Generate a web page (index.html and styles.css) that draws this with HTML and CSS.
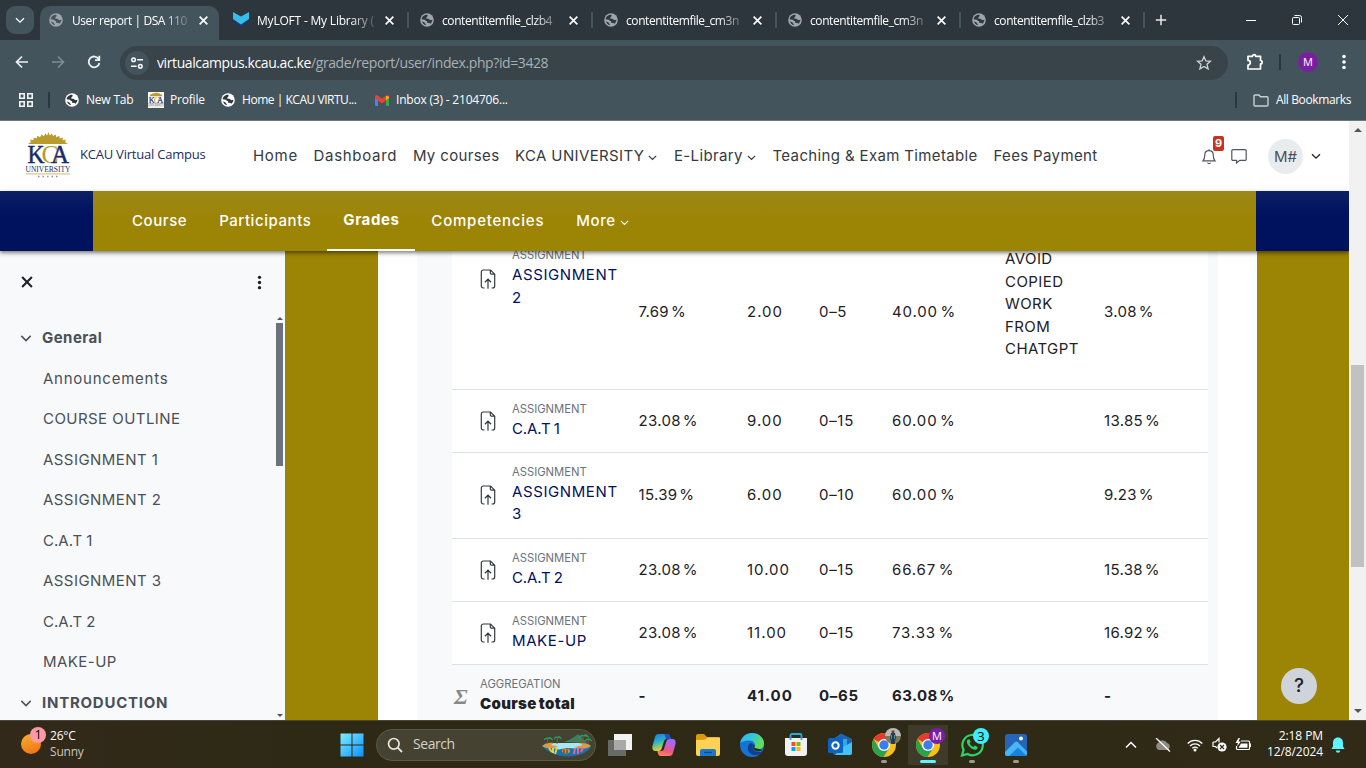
FILE: index.html
```html
<!DOCTYPE html>
<html lang="en">
<head>
<meta charset="utf-8">
<title>User report | DSA 110</title>
<link rel="stylesheet" href="styles.css">
</head>
<body>
<svg width="0" height="0" class="defs">
  <defs>
    <symbol id="globe" viewBox="0 0 16 16"><circle cx="8" cy="8" r="7.8" fill="currentColor"/><path d="M1.800 7.200C2 5 3.500 2.800 6 2.200c2-.4 3 .2 2.600 1.400L7.300 5.200c-.8.800.3 1.600 2 1.500 1.500 0 1.200 1.300 2.400 1.500l2.500-.4c-.1 2-1.200 3.700-2.400 4.600l-1.300-1.300-2.200.2-.2-1.800C7.300 8.600 6.300 8.900 5.800 7.600L1.800 7.200zM2.300 9.800l2.600.9c.6.600.3 1.200 1.600 1.900l.2 1.200C4.700 13.600 3 12 2.300 9.800z" fill="var(--hole)"/></symbol>
    <symbol id="x" viewBox="0 0 10 10"><path d="M1.500 1.500l7 7M8.500 1.500l-7 7" fill="none" stroke="currentColor" stroke-width="1.500"/></symbol>
    <symbol id="chev" viewBox="0 0 12 12"><path d="M2 4.200l4 4 4-4" fill="none" stroke="currentColor" stroke-width="1.300"/></symbol>
    <symbol id="file" viewBox="0 0 16 20"><g fill="none" stroke="#343a40" stroke-width="1.200"><path d="M4.500 19H3.300A2 2 0 0 1 1.300 17V3a2 2 0 0 1 2-2h7.200l4.200 4.200V17a2 2 0 0 1-2 2h-1.200M10.300 1v2.700a1.500 1.500 0 0 0 1.500 1.500h2.800M8 19.800V10.500M4.900 13.200L8 10.200l3.100 3"/></g></symbol>
    <symbol id="dots" viewBox="0 0 4 16"><g fill="currentColor"><circle cx="2" cy="2.500" r="1.800"/><circle cx="2" cy="8" r="1.800"/><circle cx="2" cy="13.500" r="1.800"/></g></symbol>
    <symbol id="kca" viewBox="0 0 46 46">
      <path d="M3 12L6 10 5 7.500l3.500.7L8.500 5.500l3 1L12.500 3.800l2.500 1.500L16.500 2.500l2.200 1.700L20.500 1.500l1.600 2L23.500.3l1.300 3.200 2-2 1.300 2.600L30.500 2.500l1 2.800 2.800-1.500.4 2.700 3.200-1-.3 2.700 3.300-.7L40 10l3 2z" fill="#b99a2c"/>
      <g font-family="Liberation Serif" lengthAdjust="spacingAndGlyphs">
        <text x="16.500" y="30.500" font-size="26" fill="#b99a2c" textLength="17" lengthAdjust="spacingAndGlyphs">C</text>
        <text x="2.500" y="31" font-size="26" fill="#1b2d66" stroke="#1b2d66" stroke-width=".5" textLength="17" lengthAdjust="spacingAndGlyphs">K</text>
        <text x="26" y="31" font-size="25" fill="#1b2d66" stroke="#1b2d66" stroke-width=".5" textLength="18" lengthAdjust="spacingAndGlyphs">A</text>
        <text x=".5" y="39.800" font-size="8.800" fill="#1b2d66" textLength="45" lengthAdjust="spacingAndGlyphs">UNIVERSITY</text>
      </g>
      <path d="M1 41.800h44" stroke="#d9c88a" stroke-width="1.200"/>
      <path d="M13 44.500h21" stroke="#8b93ad" stroke-width="1.300" stroke-dasharray="1.500 3"/>
    </symbol>
    <symbol id="chrome" viewBox="0 0 24 24"><circle cx="12" cy="12" r="12" fill="#fbc116"/><path d="M12 12L1.600 6A12 12 0 0 1 22.400 6H12z" fill="#e33b2e"/><path d="M1.600 6A12 12 0 0 0 11.500 24l5.700-9L12 12 6.800 15z" fill="#2ba24c"/><circle cx="12" cy="12" r="6" fill="#fff"/><circle cx="12" cy="12" r="4.700" fill="#3b7ded"/></symbol>
  </defs>
</svg>

<div class="screen">
  <header class="browser">
    <div class="tabs">
      <button class="tab-search"><svg width="12" height="12"><use href="#chev"/></svg></button>
      <div class="tab active"><svg class="fav" width="14" height="14"><use href="#globe"/></svg><span class="tab-title">User report | DSA 110</span><svg class="close" width="11" height="11"><use href="#x"/></svg></div>
      <div class="tab loft"><svg class="fav" width="16" height="16" viewBox="0 0 16 16"><path d="M1 6l7 5 7-5v4l-7 5.500L1 10z" fill="#22356f"/><path d="M0 0l8 4.500L16 0v7l-8 5.500L0 7z" fill="#35bdec"/></svg><span class="tab-title">MyLOFT - My Library (</span><svg class="close" width="11" height="11"><use href="#x"/></svg></div>
      <div class="tab"><svg class="fav" width="14" height="14"><use href="#globe"/></svg><span class="tab-title">contentitemfile_clzb4</span><svg class="close" width="11" height="11"><use href="#x"/></svg></div>
      <div class="tab"><svg class="fav" width="14" height="14"><use href="#globe"/></svg><span class="tab-title">contentitemfile_cm3n</span><svg class="close" width="11" height="11"><use href="#x"/></svg></div>
      <div class="tab"><svg class="fav" width="14" height="14"><use href="#globe"/></svg><span class="tab-title">contentitemfile_cm3n</span><svg class="close" width="11" height="11"><use href="#x"/></svg></div>
      <div class="tab"><svg class="fav" width="14" height="14"><use href="#globe"/></svg><span class="tab-title">contentitemfile_clzb3</span><svg class="close" width="11" height="11"><use href="#x"/></svg></div>
      <svg class="plus" width="12" height="12" viewBox="0 0 12 12"><path d="M6 .8v10.400M.8 6h10.400" stroke="#e4e9eb" stroke-width="1.500"/></svg>
      <div class="window-buttons">
        <svg width="12" height="12" viewBox="0 0 12 12"><path d="M1 6.500h10" stroke="#fff"/></svg>
        <svg width="12" height="12" viewBox="0 0 12 12"><path d="M1.500 4.500a1 1 0 0 1 1-1h5a1 1 0 0 1 1 1v5a1 1 0 0 1-1 1h-5a1 1 0 0 1-1-1zM3.500 1.500H8.500a2 2 0 0 1 2 2V8.500" fill="none" stroke="#fff"/></svg>
        <svg width="12" height="12" viewBox="0 0 12 12"><path d="M1 1l10 10M11 1L1 11" stroke="#fff"/></svg>
      </div>
    </div>
    <div class="toolbar">
      <div class="nav-buttons">
        <svg width="14" height="14" viewBox="0 0 14 14"><path d="M13 7H2M7 1.500L1.500 7 7 12.500" fill="none" stroke="#eef1f2" stroke-width="1.700"/></svg>
        <svg width="14" height="14" viewBox="0 0 14 14"><path d="M1 7h11M7 1.500L12.500 7 7 12.500" fill="none" stroke="#7f8c92" stroke-width="1.600"/></svg>
        <svg width="14" height="14" viewBox="0 0 14 14"><path d="M11.800 4.200A5.400 5.400 0 1 0 12.400 8M12.300.8v4.400H8" fill="none" stroke="#eef1f2" stroke-width="1.800"/></svg>
      </div>
      <div class="omnibox">
        <span class="site"><svg width="14" height="14" viewBox="0 0 14 14"><g fill="none" stroke="#fff" stroke-width="1.500"><circle cx="3.600" cy="3.800" r="1.800"/><path d="M7.200 3.800H13M1 10.200h5.600"/><circle cx="10.300" cy="10.200" r="1.800"/></g></svg></span>
        <span class="url"><b>virtualcampus.kcau.ac.ke</b>/grade/report/user/index.php?id=3428</span>
        <svg class="star" width="16" height="16" viewBox="0 0 16 16"><path d="M8 1.700l1.900 4.200 4.600.4-3.500 3 1.100 4.500L8 11.400l-4.100 2.400L5 9.300l-3.500-3 4.600-.4z" fill="none" stroke="#cfd4d6" stroke-width="1.300"/></svg>
      </div>
      <svg class="puzzle" width="18" height="18" viewBox="0 0 18 18"><path d="M2 3.300h4.500a1.600 1.600 0 0 1 3.200 0H14.500V7.500a1.700 1.700 0 0 1 0 3.400V16H2V12a2.200 2.200 0 0 0 0-4.600z" fill="none" stroke="#fff" stroke-width="1.700" stroke-linejoin="round"/></svg>
      <i class="bar"></i>
      <span class="profile">M</span>
      <svg class="menu" width="4" height="16"><use href="#dots"/></svg>
    </div>
    <div class="bookmarks">
      <svg class="apps" width="14" height="14" viewBox="0 0 14 14"><g fill="none" stroke="#f2f4f5" stroke-width="1.600"><path d="M.8.800h4.400v4.400H.8zM8.800.800h4.400v4.400H8.800zM.8 8.800h4.400v4.400H.8zM8.800 8.800h4.400v4.400H8.800z"/></g></svg>
      <i class="bar"></i>
      <span class="bm b1"><svg width="14" height="14"><use href="#globe"/></svg>New Tab</span>
      <span class="bm b2"><svg class="mini" width="16" height="16"><use href="#kca"/></svg>Profile</span>
      <span class="bm b3"><svg width="14" height="14"><use href="#globe"/></svg>Home | KCAU VIRTU...</span>
      <span class="bm b4"><svg width="14" height="11" viewBox="0 0 14 11"><path d="M0 1.500h3V11H1a1 1 0 0 1-1-1z" fill="#4285f4"/><path d="M11 1.500h3V10a1 1 0 0 1-1 1h-2z" fill="#34a853"/><path d="M0 1.800A1.700 1.700 0 0 1 2.800.500L7 3.700 11.200.500A1.700 1.700 0 0 1 14 1.800V3.200L7 8.500 0 3.200z" fill="#ea4335"/><path d="M11 1v4l3-2V1.700z" fill="#fbbc04"/></svg>Inbox (3) - 2104706...</span>
      <span class="bm all"><svg width="16" height="13" viewBox="0 0 16 13"><path d="M1 2a1 1 0 0 1 1-1h4l1.500 1.700H14a1 1 0 0 1 1 1V11a1 1 0 0 1-1 1H2a1 1 0 0 1-1-1z" fill="none" stroke="#c9ced1" stroke-width="1.400"/></svg>All Bookmarks</span>
    </div>
  </header>

  <main class="viewport">
    <div class="page">
      <div class="site-header">
        <svg class="logo" width="46" height="46"><use href="#kca"/></svg>
        <span class="brand">KCAU Virtual Campus</span>
        <nav class="primary">
          <a class="wide">Home</a><a class="wide">Dashboard</a><a>My courses</a>
          <a>KCA UNIVERSITY<svg width="11" height="11"><use href="#chev"/></svg></a>
          <a>E-Library<svg width="11" height="11"><use href="#chev"/></svg></a>
          <a>Teaching &amp; Exam Timetable</a><a>Fees Payment</a>
        </nav>
        <span class="bell"><svg width="16" height="17" viewBox="0 0 16 17"><path d="M8 1.200v1.300M2 12.800h12c-1.400-1.400-1.700-2.800-1.700-5.400C12.300 4.600 10.600 2.700 8 2.700S3.700 4.600 3.700 7.400c0 2.600-.3 4-1.700 5.400zM6.500 14.600a1.600 1.600 0 0 0 3 0" fill="none" stroke="#50575e" stroke-width="1.200"/></svg><b class="count">9</b></span>
        <svg class="chat" width="16" height="16" viewBox="0 0 16 16"><path d="M2 1.600h12a1.200 1.200 0 0 1 1.200 1.200v8.400a1.200 1.200 0 0 1-1.200 1.200H8.800L5.600 15v-2.600H2A1.200 1.200 0 0 1 .8 11.200V2.800A1.200 1.200 0 0 1 2 1.600z" fill="none" stroke="#50575e" stroke-width="1.200"/></svg>
        <span class="avatar">M#</span>
        <svg class="user-chev" width="12" height="12"><use href="#chev"/></svg>
      </div>
      <div class="secondary">
        <nav class="secondary-inner"><a>Course</a><a>Participants</a><a class="current">Grades</a><a class="wide">Competencies</a><a>More<svg width="11" height="11"><use href="#chev"/></svg></a></nav>
      </div>
      <div class="body">
        <aside class="drawer">
          <div class="drawer-top"><svg width="14" height="14"><use href="#x"/></svg><svg width="5" height="15"><use href="#dots"/></svg></div>
          <ul class="index">
            <li class="section"><svg width="14" height="14"><use href="#chev"/></svg>General</li>
            <li class="wide">Announcements</li><li>COURSE OUTLINE</li><li>ASSIGNMENT 1</li><li>ASSIGNMENT 2</li><li class="tight">C.A.T 1</li><li>ASSIGNMENT 3</li><li class="tight">C.A.T 2</li><li>MAKE-UP</li>
            <li class="section wide"><svg width="14" height="14"><use href="#chev"/></svg><span>INTRODUCTION</span></li>
          </ul>
          <div class="drawer-scroll"><i class="up"></i><i class="thumb"></i><i class="down"></i></div>
        </aside>
        <section class="content">
          <div class="panel">
            <div class="grades">
              <div class="row first"><svg class="file" width="16" height="20"><use href="#file"/></svg><div class="item"><small>ASSIGNMENT</small><a>ASSIGNMENT 2</a></div><span>7.69 %</span><span>2.00</span><span>0–5</span><span>40.00 %</span><span class="feedback">AVOID COPIED WORK FROM CHATGPT</span><span>3.08 %</span></div>
              <div class="row"><svg class="file" width="16" height="20"><use href="#file"/></svg><div class="item"><small>ASSIGNMENT</small><a class="tight">C.A.T 1</a></div><span>23.08 %</span><span>9.00</span><span>0–15</span><span>60.00 %</span><span></span><span>13.85 %</span></div>
              <div class="row tall"><svg class="file" width="16" height="20"><use href="#file"/></svg><div class="item"><small>ASSIGNMENT</small><a>ASSIGNMENT 3</a></div><span>15.39 %</span><span>6.00</span><span>0–10</span><span>60.00 %</span><span></span><span>9.23 %</span></div>
              <div class="row"><svg class="file" width="16" height="20"><use href="#file"/></svg><div class="item"><small>ASSIGNMENT</small><a class="tight">C.A.T 2</a></div><span>23.08 %</span><span>10.00</span><span>0–15</span><span>66.67 %</span><span></span><span>15.38 %</span></div>
              <div class="row"><svg class="file" width="16" height="20"><use href="#file"/></svg><div class="item"><small>ASSIGNMENT</small><a>MAKE-UP</a></div><span>23.08 %</span><span>11.00</span><span>0–15</span><span>73.33 %</span><span></span><span>16.92 %</span></div>
              <div class="row total"><em class="sigma">Σ</em><div class="item"><small>AGGREGATION</small><b>Course total</b></div><span>-</span><span>41.00</span><span>0–65</span><span>63.08 %</span><span></span><span>-</span></div>
            </div>
          </div>
          <button class="help">?</button>
        </section>
      </div>
    </div>
    <div class="scrollbar"><i class="up"></i><i class="thumb"></i><i class="down"></i></div>
  </main>

  <footer class="taskbar">
    <div class="weather">
      <span class="sun"><b>1</b></span>
      <span class="temp">26°C<br><span>Sunny</span></span>
    </div>
    <svg class="start" width="24" height="24" viewBox="0 0 24 24"><defs><linearGradient id="win" gradientUnits="userSpaceOnUse" x1="0" y1="0" x2="24" y2="24"><stop stop-color="#7ff0ff"/><stop offset="1" stop-color="#0a8dff"/></linearGradient></defs><path d="M.5.500h11v11H.5zM12.500.500h11v11h-11zM.5 12.500h11v11H.5zM12.500 12.500h11v11h-11z" fill="url(#win)"/></svg>
    <div class="search">
      <svg width="16" height="16" viewBox="0 0 16 16"><circle cx="6.800" cy="6.800" r="5.300" fill="none" stroke="#e6e6e2" stroke-width="1.700"/><path d="M10.700 10.700L15 15" stroke="#e6e6e2" stroke-width="1.800"/></svg>
      <span>Search</span>
      <svg width="50" height="24" viewBox="0 0 50 24"><path d="M22 9l5-2 5-3 4-3 4 4 5 5z" fill="#3f7f5e"/><path d="M8 10h36l5 4c-3 5-12 9.500-23 9.500S5 19 1 14z" fill="#1273ad"/><path d="M11 10h28l4 4-10 1.500-8-.5-8 1.500-12-2.500z" fill="#a9e6ee"/><path d="M0 13c3-3 7-4 12-3l-3 2 7 1.500C12 16 4 16 0 13zM33 14l8-2-4-2c5-.5 10 .5 12 3-3 3-12 3.500-16 1z" fill="#d89a4b"/><path d="M5 11l1-6M15 11l.5-6M40 10l1.500-6M46 11l.5-5" stroke="#8a5631"/><path d="M2 7q1-3 4-2 3-2 5 2-3-2-5-1.500Q4 5 2 7zM12 6q1-3 3.500-2 2.500-2 4 2-2-2-4-1.500Q14 4 12 6zM37 5q1-4 4.500-2.500 3-2.500 5.500 2-3-2-5.500-1.500Q39 3 37 5zM43 8q1-3 3.500-2 2-1 3.500 2-2-1.500-3.500-1.300Q45 6.500 43 8z" fill="#24a163" stroke="#24a163" stroke-width=".7"/><path d="M7 15l3 4M11 15v5M15 15l-2 6" stroke="#e9cf3e" stroke-width="2"/><path d="M32 21l1-6M36 21V15M39 19l2-4" stroke="#ee609d" stroke-width="2"/><ellipse cx="24" cy="18" rx="4" ry="2.300" fill="#f28a2b"/><path d="M22 16.500v3.500M25 16.500v3.500" stroke="#4b2a1d"/></svg>
    </div>
    <div class="apps-row">
      <span class="app"><svg width="26" height="24" viewBox="0 0 26 24"><path d="M7 1h18v16H7z" fill="#f2f2f2"/><path d="M1 7h18v16H1z" fill="#6d6d6a" opacity=".95"/><path d="M7 7h12v10H7z" fill="#a9a9a7"/></svg></span>
      <span class="app"><svg width="26" height="24" viewBox="0 0 26 24"><defs><linearGradient id="c1" x2=".3" y2="1"><stop stop-color="#1b76e9"/><stop offset=".5" stop-color="#27b5c6"/><stop offset="1" stop-color="#e8d32a"/></linearGradient><linearGradient id="c2" x2="-.3" y2="1"><stop stop-color="#a867ef"/><stop offset=".5" stop-color="#f3567f"/><stop offset="1" stop-color="#fba04d"/></linearGradient></defs><path d="M7.500 1h8.500c2 0 2.700 1 3.200 3l.5 2h-4c-1.500 0-2.200.7-2.700 2.300L11 14.500C10.400 17 9.500 18 7.500 18H5C2 18 .8 16 1.500 13L4 4c.6-2 1.600-3 3.500-3z" fill="url(#c1)"/><path d="M19 6h2c3 0 4.200 2 3.500 5L22 20c-.6 2-1.600 3-3.500 3H10c-2 0-2.700-1-3.200-3l-.5-2h4c1.500 0 2.200-.7 2.700-2.300L15 9.500C15.600 7 16.500 6 19 6z" fill="url(#c2)"/><path d="M13.500 1H16c2 0 2.700 1 3.200 3l.6 2H15z" fill="#1c50c5"/></svg></span>
      <span class="app"><svg width="26" height="24" viewBox="0 0 26 24"><path d="M1 3a2 2 0 0 1 2-2h6l3 3h11a2 2 0 0 1 2 2v6H1z" fill="#d99a0b"/><path d="M1 7l9-.2L12.500 4.500H25V21a2 2 0 0 1-2 2H3a2 2 0 0 1-2-2z" fill="#ffd155"/><path d="M5 23v-5a2 2 0 0 1 2-2h12a2 2 0 0 1 2 2v5z" fill="#1a78cf"/><path d="M9 19.500h8" stroke="#0c4f94" stroke-width="1.500"/></svg></span>
      <span class="app"><svg width="24" height="24" viewBox="0 0 24 24"><defs><linearGradient id="e1" x2="1" y2=".4"><stop stop-color="#2fb4f3"/><stop offset=".5" stop-color="#34c3e0"/><stop offset="1" stop-color="#62e24f"/></linearGradient></defs><circle cx="12" cy="12" r="12" fill="#1474d4"/><path d="M.2 10C1.400 4 6 0 12 0c7 0 12 5 12 10.500 0 4-3 6-6.500 6-2.500 0-4-.8-3.500-1.700 2-2.300 1-7.300-5-7.300C4.600 7.500 1 9 .2 10z" fill="url(#e1)"/><path d="M9 11c-3 5 0 11 6 11 3 0 5.300-1 7.300-3.600C20 19.500 16 19.500 13.500 17 11.700 15 12.200 13 13 11.500 12 10 10 10 9 11z" fill="#123f8c"/><path d="M14 14.800c1-1 .8-2.800-.5-3.600-1.500 1.700-1.200 5 2 6.500 3 1 6 .3 7-.9" fill="#302b18"/></svg></span>
      <span class="app"><svg width="24" height="24" viewBox="0 0 24 24"><path d="M6.500 7V2.500A1.500 1.500 0 0 1 8 1h8a1.500 1.500 0 0 1 1.500 1.500V7" fill="none" stroke="#29a8e0" stroke-width="1.800"/><path d="M1 5h22v15a3 3 0 0 1-3 3H4a3 3 0 0 1-3-3z" fill="#f1f1f1"/><path d="M6.500 5v2M17.500 5v2" stroke="#29a8e0" stroke-width="1.800"/><path d="M7.500 9H11.500v4h-4z" fill="#f25022"/><path d="M12.500 9h4v4h-4z" fill="#7fba00"/><path d="M7.500 14h4v4h-4z" fill="#00a4ef"/><path d="M12.500 14h4v4h-4z" fill="#ffb900"/></svg></span>
      <span class="app"><svg width="24" height="24" viewBox="0 0 24 24"><path d="M5 6l8-5.500L24 6v14a2 2 0 0 1-2 2H7a2 2 0 0 1-2-2z" fill="#1b64b8"/><path d="M5 6h14v8H5z" fill="#36a4e8"/><path d="M24 9L12 16l-5 6h15a2 2 0 0 0 2-2z" fill="#42c3f5"/><rect y="5" width="15" height="15" rx="1.500" fill="#0c62bf"/><circle cx="7.500" cy="12.500" r="3.200" fill="none" stroke="#fff" stroke-width="2"/></svg></span>
      <span class="app run"><svg width="24" height="24"><use href="#chrome"/></svg><b class="tag photo"><svg width="16" height="16" viewBox="0 0 16 16"><path d="M0 0h16v8H0z" fill="#b9bab8"/><path d="M0 8h16v8H0z" fill="#7b7a55"/><path d="M6 5h4l1 5-1 3v3H6v-3l-1-3z" fill="#25384c"/><path d="M6.500 7v4M9.500 7v4" stroke="#5d8cab"/><circle cx="8" cy="3.800" r="1.600" fill="#6b4532"/></svg></b></span>
      <span class="app run focus"><svg width="24" height="24"><use href="#chrome"/></svg><b class="tag user">M</b></span>
      <span class="app run"><svg width="24" height="24" viewBox="0 0 24 24"><path d="M2 22.500l1.600-5.600A10.200 10.200 0 1 1 7.600 21z" fill="none" stroke="#2bd467" stroke-width="2.200"/><path d="M8 6.600c-2 1.400-1.200 4.500 1.800 7.400s6.300 3.600 7.600 1.500l.2-1.500-2.900-1.500-1.300 1.400c-2-.8-3-1.800-3.900-3.700l1.200-1.300-1.200-2.400z" fill="#2bd467"/></svg><b class="tag three">3</b></span>
      <span class="app run"><svg width="24" height="24" viewBox="0 0 24 24"><rect x="1" y="1" width="22" height="22" rx="2.500" fill="#2464b9"/><path d="M1 19l10-10a2 2 0 0 1 2.600 0L23 18.500V21a2 2 0 0 1-2 2H3a2 2 0 0 1-2-2z" fill="#48b6f5"/><path d="M5 23l9-8.500L23 23z" fill="#1684dc"/><circle cx="17" cy="5.500" r="2" fill="#fff"/></svg></span>
    </div>
    <div class="tray">
      <svg width="12" height="12" viewBox="0 0 12 12"><path d="M1 8.500l5-5 5 5" fill="none" stroke="#fff" stroke-width="1.500"/></svg>
      <svg width="16" height="14" viewBox="0 0 16 14"><path d="M4 12a4 4 0 0 1-.5-7.500A5 5 0 0 1 12 5a3.600 3.600 0 0 1 0 7z" fill="#8e8c82"/><path d="M1 0l14 13.500" stroke="#fff" stroke-width="1.300"/></svg>
      <svg width="16" height="14" viewBox="0 0 16 14"><g fill="none" stroke="#fff" stroke-width="1.300"><path d="M.7 5.500a10 10 0 0 1 14.600 0M3 8a7 7 0 0 1 10 0M5.300 10.300a4 4 0 0 1 5.400 0"/></g><circle cx="8" cy="12" r="1.500" fill="#fff"/></svg>
      <svg width="15" height="15" viewBox="0 0 15 15"><path d="M1 5h2.500L7 1.500v4M1 5v4.500h2.500l1.500 1.500" fill="none" stroke="#fff" stroke-width="1.200"/><circle cx="10" cy="10" r="4.600" fill="#fff"/><path d="M8 8l4 4M12 8l-4 4" stroke="#302b18" stroke-width="1.100"/></svg>
      <svg width="16" height="13" viewBox="0 0 16 13"><path d="M6 3h7.500a1 1 0 0 1 1 1v6.500a1 1 0 0 1-1 1H2.500a1 1 0 0 1-1-1V8" fill="none" stroke="#fff" stroke-width="1.200"/><path d="M6 5.500h6.500v4.300h-9z" fill="#fff"/><path d="M3.500 0L.5 5H3L2 8.500 5.800 3.500H3.500L5 0z" fill="#fff"/><path d="M15.300 5.500v3.500" stroke="#fff" stroke-width="1.300"/></svg>
      <span class="clock">2:18 PM<br>12/8/2024</span>
      <svg width="14" height="16" viewBox="0 0 14 16"><path d="M7 .5c3.200 0 5 2.300 5 5.200v3.500l1.500 2.800H.5L2 9.200V5.700C2 2.800 3.800.500 7 .5zM4.800 13.500h4.400a2.200 2.200 0 0 1-4.400 0z" fill="#5ff4ff"/></svg>
    </div>
  </footer>
</div>
</body>
</html>
```
FILE: styles.css
```css
* { box-sizing: border-box; }
body { margin: 0; overflow: hidden; }
.defs { position: absolute; }
svg { display: block; flex: none; }
i { display: block; }
.screen { width: 1366px; height: 768px; display: grid; grid-template-rows: 121px 599px 48px; overflow: hidden; font-family: "Inter", sans-serif; }

/* browser chrome */
.browser { background: #44545c; color: #fff; font: 12px/16px "Open Sans", sans-serif; border-bottom: 1px solid #6d7981; --hole: #2c363c; }
.tabs { height: 40px; background: #2c363c; display: flex; align-items: center; }
.tab-search { width: 28px; height: 28px; margin: 0 6px; padding: 0; border: 0; border-radius: 9px; background: #44545c; color: #fff; display: flex; align-items: center; justify-content: center; }
.tab { width: 184px; height: 16px; padding: 0 12px 0 11px; display: flex; align-items: center; gap: 8px; border-right: 2px solid #44545c; color: #fff; }
.tab .fav { color: #9fa5ad; }
.tab-title { flex: 1; white-space: nowrap; padding-top: 1px; letter-spacing: -.42px; -webkit-mask-image: linear-gradient(90deg, #000 80%, transparent 105%); mask-image: linear-gradient(90deg, #000 80%, transparent 105%); }
.tab.active { width: 179px; height: 34px; align-self: flex-end; background: #44545c; border: 0; border-radius: 10px 10px 0 0; padding: 0 11px 6px 9px; gap: 9px; --hole: #44545c; }
.active .tab-title { letter-spacing: -.43px; }
.tab.loft { width: 190px; padding-left: 14px; }
.loft .tab-title { letter-spacing: -.2px; }
.tab .close { margin-left: 2px; }
.plus { margin-left: 10px; }
.window-buttons { margin-left: auto; display: flex; gap: 34px; padding-right: 17px; }
.toolbar { height: 44px; display: flex; align-items: center; padding-bottom: 0; background: #44545c; }
.nav-buttons { width: 120px; padding-left: 15px; display: flex; gap: 22px; }
.omnibox { width: 1108px; height: 34px; margin-top: 2px; border-radius: 17px; background: #38434a; display: flex; align-items: center; padding: 0 16px 0 5px; }
.site { width: 24px; height: 24px; border-radius: 50%; background: #44545c; display: flex; align-items: center; justify-content: center; }
.url { margin-left: 8px; flex: 1; font-size: 14px; letter-spacing: -.4px; color: #a9b0b4; }
.url b { color: #fff; font-weight: 400; }
.puzzle { margin-left: 18px; }
.bar { width: 2px; height: 16px; background: #2c363c; }
.toolbar .bar { margin: 0 17px 0 15px; }
.profile { width: 20px; height: 20px; border-radius: 50%; background: #7b1fa2; font-size: 11px; line-height: 20px; text-align: center; }
.menu { margin-left: 24px; }
.bookmarks { height: 32px; display: flex; align-items: center; padding-left: 19px; }
.bookmarks .bar { margin: 0 15px; }
.bm { display: flex; align-items: center; gap: 7px; white-space: nowrap; letter-spacing: -.2px; }
.b1 { width: 83px; }
.b2 { width: 73px; }
.b2 svg { margin-right: -1px; }
.b3 { width: 154px; letter-spacing: -.47px; }
.mini { background: #fff; }
.all { margin: 0 15px 0 auto; padding-left: 16px; border-left: 2px solid #2c363c; letter-spacing: -.38px; }

/* page */
.viewport { display: grid; grid-template-columns: 1349px 17px; overflow: hidden; }
.page { display: grid; grid-template-rows: 70px 60px 469px; font-size: 15px; line-height: 22.5px; color: #1d2125; overflow: hidden; }
.site-header { background: #fff; display: flex; align-items: center; }
.logo { margin: 0 9px 2px 25px; }
.brand { width: 173px; color: #1b2d66; font: 500 13px/20px "Open Sans", sans-serif; letter-spacing: -.22px; padding-bottom: 5px; white-space: nowrap; }
.primary { display: flex; gap: 15.700px; width: 948px; white-space: nowrap; color: #343a40; letter-spacing: .36px; }
.primary .wide { letter-spacing: .7px; }
.primary a, .secondary a { display: flex; align-items: center; }
.primary svg, .secondary svg { margin: 3px 0 0 3px; }
.bell { position: relative; margin-right: 14px; }
.count { position: absolute; left: 12px; top: -12px; width: 11px; height: 15px; border-radius: 2px; background: #ca3120; color: #fff; font-size: 11px; line-height: 15px; text-align: center; }
.avatar { margin: 0 7px 0 21px; width: 35px; height: 35px; border-radius: 50%; background: #e9ecef; color: #495057; text-align: center; line-height: 35px; }
.secondary { background: linear-gradient(#0d1f66, #00115e 40%); padding: 0 93px; z-index: 2; box-shadow: 0 2px 4px rgba(0, 0, 0, .5); }
.secondary-inner { height: 60px; background: linear-gradient(#9d8817, #9c8404 50%); padding-left: 23px; display: flex; color: #fff; font-weight: 500; letter-spacing: .56px; }
.secondary a { padding: 0 16px; }
.secondary a.wide { letter-spacing: .78px; }
.secondary .current { font-weight: 700; border-bottom: 2px solid #fff; }
.body { background: #9c8404; display: grid; grid-template-columns: 285px 1064px; overflow: hidden; }
.drawer { position: relative; background: #f8f9fb; color: #495057; }
.drawer-top { display: flex; justify-content: space-between; padding: 24px 23px 0 20px; height: 66px; color: #1d2125; }
.index { list-style: none; margin: 0; padding: 0; letter-spacing: .45px; }
.index li { height: 40.5px; padding-left: 43px; line-height: 42px; white-space: nowrap; }
.index .wide { letter-spacing: .76px; }
.index .tight { letter-spacing: 0; }
.index .section { font-weight: 700; display: flex; align-items: center; gap: 9px; padding: 2px 0 0 19px; }
.drawer-scroll { position: absolute; right: 2px; top: 66px; width: 7px; height: 400px; display: flex; flex-direction: column; align-items: center; }
.drawer-scroll .thumb { width: 7px; height: 143px; background: #6a737b; margin: 3px 0 auto; }
.up, .down { border: 3px solid transparent; width: 0; height: 0; }
.up { border-bottom: 3px solid #555; border-top: 0; }
.down { border-top: 3px solid #555; border-bottom: 0; }
.content { margin: 0 92px 0 93px; padding: 0 39px; background: #fff; height: 469px; position: relative; }
.panel { height: 469px; padding: 0 10px 0 35px; background: #f8f9fb; overflow: hidden; }
.grades { margin-top: -18px; }
.row { height: 63px; border-bottom: 1px solid #dee2e6; background: #fff; display: grid; grid-template-columns: 60px 126.5px 108.500px 72px 73px 113px 99px 1fr; align-items: center; }
.row > span { letter-spacing: .3px; word-spacing: -2.500px; }
.row > span:nth-child(4) { letter-spacing: 1px; }
.row > span:nth-child(5) { letter-spacing: .7px; }
.row > span:nth-child(6) { letter-spacing: .85px; }
.file { margin-left: 28px; }
.item small { display: block; font-size: 11.250px; line-height: 17px; color: #6a737b; }
.item a, .item b { display: block; width: 108px; color: #00115e; letter-spacing: .6px; word-spacing: -1px; }
.item a.tight { letter-spacing: -.1px; }
.tall { height: 86px; }
.tall .file, .tall .item { margin-top: -2px; }
.first { height: 157px; }
.first > span { margin-top: 2px; }
.first .item, .first .file { align-self: start; margin-top: 14px; }
.first .file { margin-top: 36px; }
.row > .feedback { width: 80px; margin-top: -13px; word-spacing: 0; letter-spacing: .42px; }
.total { background: #f8f9fb; font-weight: 700; grid-template-columns: 28px 158.500px 108.500px 72px 73px 113px 99px 1fr; }
.total small { font-weight: 400; }
.item b { color: #1d2125; letter-spacing: .3px; }
.row.total > span:nth-child(6) { letter-spacing: .4px; }
.sigma { color: #888; font: italic bold 22px/24px "Liberation Serif", serif; padding: 2px 0 0 2px; }
.help { position: absolute; right: -60px; bottom: 16px; width: 36px; height: 36px; padding: 0; border: 0; border-radius: 50%; background: #ced4da; color: #1d2125; font: 500 19px/36px "Inter", sans-serif; text-align: center; }
.scrollbar { background: #f1f1f1; display: flex; flex-direction: column; align-items: center; padding: 7px 0; }
.scrollbar .thumb { width: 13px; height: 202px; background: #c1c1c1; margin: 233px 0 auto; }
.scrollbar .up, .scrollbar .down { border-left-width: 4px; border-right-width: 4px; }
.scrollbar .up { border-bottom-width: 4px; }
.scrollbar .down { border-top-width: 4px; }

/* taskbar */
.taskbar { background: linear-gradient(90deg, #33291a, #2d2915 25%, #302a17); border-top: 1px solid #4b4636; color: #fff; display: flex; align-items: center; font: 12px/16px "Open Sans", sans-serif; }
.weather { width: 340px; padding-left: 21px; display: flex; align-items: center; gap: 9px; margin-top: -2px; letter-spacing: -.2px; }
.temp span { color: #c9c7bf; }
.sun { position: relative; width: 20px; height: 20px; border-radius: 50%; background: linear-gradient(160deg, #f5b32b, #f26c13); }
.sun b { position: absolute; left: 9px; top: -7px; width: 16px; height: 16px; border-radius: 50%; background: #ff99a4; color: #000; font-weight: 400; text-align: center; }
.search { margin-left: 12px; width: 220px; height: 32px; border-radius: 16px; border: 1px solid #5d5948; background: #464231; display: flex; align-items: center; padding: 0 3px 0 10px; font-size: 14px; color: #d4d2c9; }
.search span { flex: 1; margin: -2px 0 0 10px; letter-spacing: -.45px; }
.apps-row { display: flex; margin-left: 2px; }
.app { width: 44px; height: 47px; display: flex; align-items: center; justify-content: center; position: relative; }
.focus { background: linear-gradient(#3f3b2a, #3f3b2a) center / 40px 40px no-repeat; }
.run::after { content: ""; position: absolute; bottom: 5px; width: 6px; height: 3px; border-radius: 2px; background: #9d9a8e; }
.focus::after { width: 16px; background: #5ff4ff; }
.tag { position: absolute; left: 23px; top: 7px; width: 16px; height: 16px; border-radius: 50%; overflow: hidden; font-weight: 400; font-size: 11px; text-align: center; }
.user { background: #7b1fa2; }
.three { background: #3cefff; color: #000; font-size: 13px; }
.tray { margin-left: auto; padding-right: 21px; display: flex; align-items: center; }
.tray svg { margin-right: 12px; }
.tray svg:nth-child(1) { margin-right: 18px; }
.tray svg:nth-child(2) { margin-right: 16px; }
.tray svg:nth-child(3), .tray svg:nth-child(4) { margin-right: 9px; }
.tray svg:nth-child(4) { margin-right: 8px; }
.tray svg:last-child { margin: 0 0 0 8px; }
.clock { text-align: right; width: 60px; margin-top: -2px; letter-spacing: -.08px; }
```
